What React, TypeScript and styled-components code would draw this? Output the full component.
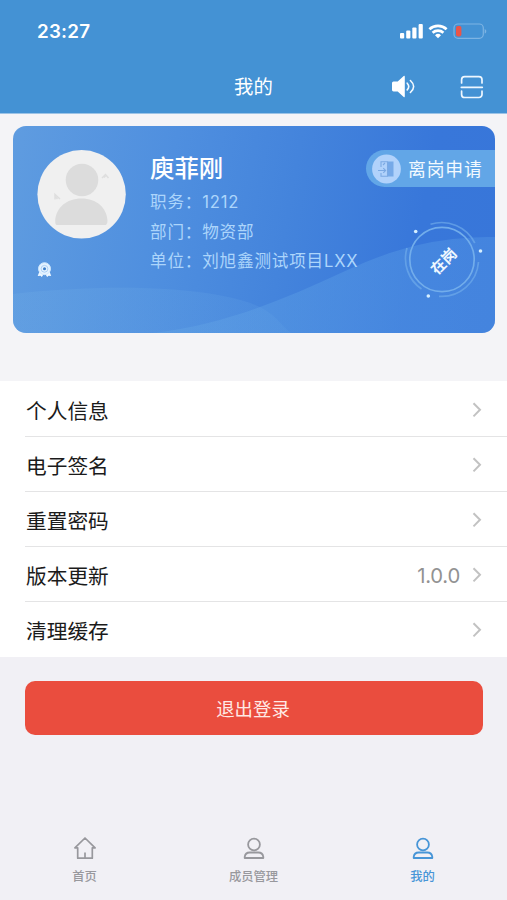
import React from "react";
import styled, { createGlobalStyle } from "styled-components";

const GlobalStyle = createGlobalStyle`
  * { box-sizing: border-box; }
  body {
    margin: 0;
    background: #f1f0f5;
    font-family: Inter, "Noto Sans CJK SC", sans-serif;
  }
`;

const Screen = styled.div`
  width: 507px;
  height: 900px;
  display: flex;
  flex-direction: column;
  overflow: hidden;
  background: linear-gradient(#f4f4f7 0, #f4f4f7 381px, #f1f0f5 381px);
`;

const Header = styled.header`
  height: 114px;
  flex: none;
  background: #4492d4;
  border-bottom: 1px solid #9cc3e6;
  color: #fff;
`;

const StatusBar = styled.div`
  height: 62px;
  display: flex;
  align-items: center;
  justify-content: space-between;
  padding: 0 20px 0 37px;
`;

const Clock = styled.span`
  font-size: 18.8px;
  font-weight: 600;
  letter-spacing: 0.2px;
`;

const NavBar = styled.div`
  height: 50px;
  display: grid;
  grid-template-columns: 1fr auto 1fr;
  align-items: center;
  padding: 0 23px;
`;

const NavTitle = styled.h1`
  grid-column: 2;
  margin: 0;
  font-size: 19.4px;
  font-weight: 400;
  line-height: 28px;
`;

const NavActions = styled.div`
  display: flex;
  justify-content: flex-end;
  align-items: center;
  gap: 45px;
`;

const Card = styled.section`
  position: relative;
  flex: none;
  height: 207px;
  margin: 12px 12px 48px 13px;
  border-radius: 13px;
  overflow: hidden;
  display: flex;
  padding: 24px 0 0 24px;
  background: linear-gradient(100deg, #5f9ce0 0%, #4f8fdf 32%, #4484dc 56%, #3877da 82%, #3876d9 100%);
`;

const CardWaves = styled.svg`
  position: absolute;
  inset: 0;
`;

const Side = styled.div`
  position: relative;
  width: 113px;
  display: flex;
  flex-direction: column;
  gap: 23px;
`;

const Details = styled.div`
  position: relative;
  color: #acd5fb;
`;

const Name = styled.h2`
  margin: 0 0 5px;
  color: #fff;
  font-size: 24.4px;
  font-weight: 500;
  line-height: 37px;
`;

const Detail = styled.p<{ $height: number }>`
  margin: 0;
  height: ${({ $height }) => $height}px;
  font-size: 16.6px;
  line-height: 20px;
  letter-spacing: 0.8px;
  white-space: nowrap;
`;

const LeaveButton = styled.button`
  position: absolute;
  right: 0;
  top: 24px;
  width: 129px;
  height: 37px;
  display: flex;
  align-items: center;
  gap: 7px;
  padding: 0 0 0 6px;
  border: 0;
  border-radius: 19px 0 0 19px;
  background: #62a6e7;
  color: #f3faff;
  font: inherit;
  font-size: 17.8px;
  letter-spacing: 0.9px;
  white-space: nowrap;
`;

const LeaveLabel = styled.span`
  margin-top: -2px;
`;

const Stamp = styled.div`
  position: absolute;
  left: 389px;
  top: 93px;
  width: 82px;
  height: 82px;
  display: grid;
  place-items: center;
  & > * { grid-area: 1 / 1; }
`;

const StampText = styled.span`
  transform: rotate(-45deg);
  color: #eff8ff;
  font-size: 14.8px;
  font-weight: 700;
`;

const Menu = styled.nav`
  flex: none;
  height: 276px;
  background: #fff;
  padding-left: 25px;
`;

const MenuRow = styled.div`
  height: 55px;
  display: flex;
  align-items: center;
  padding: 3px 24px 0 1px;
  color: #1b1b1b;
  font-size: 20.7px;
  &:not(:last-child) { box-shadow: 0 1px 0 #e4e4e5; }
`;

const MenuLabel = styled.span`
  flex: 1;
  margin-top: -1px;
`;

const Version = styled.span`
  margin-right: 10px;
  color: #929292;
  font-size: 20.3px;
  letter-spacing: -0.25px;
`;

const Logout = styled.button`
  flex: none;
  height: 54px;
  margin: 24px 24px 0 25px;
  padding: 0 2px 0 0;
  border: 0;
  border-radius: 10px;
  background: #ea4d3e;
  color: #ffe9e5;
  font: inherit;
  font-size: 18.4px;
`;

const TabBar = styled.footer`
  margin-top: auto;
  flex: none;
  height: 64px;
  display: grid;
  grid-template-columns: repeat(3, 1fr);
`;

const Tab = styled.div<{ $active?: boolean }>`
  display: flex;
  flex-direction: column;
  align-items: center;
  gap: 7px;
  color: ${({ $active }) => ($active ? "#4795d7" : "#98989d")};
  font-size: 12.3px;
  font-weight: 500;
  line-height: 20px;
`;

const StatusIcons = () => (
  <svg width="87" height="22" viewBox="400 20 87 22" fill="none">
    <g fill="#fff">
      <rect x="400" y="33" width="4.2" height="5.4" rx="1" />
      <rect x="406.2" y="30.5" width="4.2" height="7.9" rx="1" />
      <rect x="412.3" y="27.4" width="4.2" height="11" rx="1" />
      <rect x="418.6" y="24" width="4.2" height="14.4" rx="1" />
      <path d="M438 38.3l-3-3.1a4.4 4.4 0 0 1 6 0z" />
    </g>
    <path d="M429.4 29.2a12.7 12.7 0 0 1 17.2 0M432.6 32.8a8 8 0 0 1 10.8 0" stroke="#fff" strokeWidth="2.7" />
    <rect x="454" y="24" width="29.3" height="14.3" rx="4" stroke="#7db4e3" strokeWidth="1.2" />
    <rect x="456" y="26" width="5.4" height="10.4" rx="1.8" fill="#eb5549" />
    <path d="M484.7 29v4.6c2.1-.8 2.1-3.8 0-4.6z" fill="#7db4e3" />
  </svg>
);

const SpeakerIcon = () => (
  <svg width="24" height="24" viewBox="391 75 24 24" fill="none">
    <path d="M392 83q0-1.500 1.500-1.500h4.200l6-5.400q1.100-.8 1.100.7v19.400q0 1.500-1.100.7l-6-5.400h-4.200Q392 91.500 392 90z" fill="#fff" />
    <path d="M407.200 83.200q3.100 3.300 0 6.700M410.400 80.500q6.500 6 0 12" stroke="#f4faff" strokeWidth="1.600" strokeLinecap="round" />
  </svg>
);

const ScanIcon = () => (
  <svg width="24" height="24" viewBox="460 74 24 24" fill="none" stroke="#eef7ff" strokeWidth="1.7" strokeLinecap="round">
    <path d="M461.600 82v-3.200a3.100 3.100 0 0 1 3.100-3.100h14.200a3.100 3.100 0 0 1 3.100 3.100V82M461.600 90.200v3.200a3.100 3.100 0 0 0 3.100 3.100h14.200a3.100 3.100 0 0 0 3.100-3.100v-3.200M461.300 86.300h21" />
  </svg>
);

const Avatar = () => (
  <svg width="89" height="89" viewBox="0 0 89 89">
    <circle cx="44.600" cy="44.300" r="44.200" fill="#f0f0f0" />
    <circle cx="45" cy="30" r="16.300" fill="#dcdcdc" />
    <path d="M19.500 75q-1.500-1-1.300-4c.7-13 11-22.400 26.300-22.400S69.700 58 70.500 70.500q.2 3-1.500 4.500z" fill="#dcdcdc" />
    <path d="M65 28l3.500-3.500L71.500 28M67 27.500l1.500-1.500M18 49.500V44.500l5 4.500M18.500 47l2 2" stroke="#dedede" strokeWidth="1.500" fill="none" />
  </svg>
);

const MedalIcon = () => (
  <svg width="15" height="16" viewBox="0 0 15 16">
    <path d="M3 8L.7 14l2.800-.3 1.300 1.300 1.700-2.500h2l1.700 2.500 1.300-1.300 2.700.3L12 8z" fill="#eff8ff" />
    <circle cx="7.500" cy="6.700" r="6" fill="#e4f2ff" stroke="#cce5fc" />
    <circle cx="7.500" cy="6.800" r="3.400" fill="none" stroke="#9dc7f1" strokeWidth=".8" />
    <circle cx="7.500" cy="6.800" r="1.500" fill="#3d7fc9" />
  </svg>
);

const DoorIcon = () => (
  <svg width="29" height="30" viewBox="0 0 29 30">
    <circle cx="14.500" cy="15" r="14.400" fill="#b1d2fb" />
    <path d="M15.500 7.500h6v15h-6z" fill="#76a9e8" />
    <path d="M9 13V7.800h6.500v14.400H9V19M6 16.500h7.500M11.300 14.200l2.300 2.300-2.300 2.300M11 11l2-2" fill="none" stroke="#7ba9e3" strokeWidth="1.100" />
  </svg>
);

const StampRing = () => (
  <svg width="82" height="82" viewBox="402 219 82 82" fill="none" stroke="#72adeb">
    <circle cx="442" cy="259.500" r="32.200" strokeWidth="1.700" />
    <path d="M430.500 224.300A37 37 0 0 1 474.800 243M407 248A37 37 0 0 0 421.500 289M439 296.300A37 37 0 0 0 478.500 262" strokeWidth="1.700" opacity=".65" />
    <g fill="#d6efff" stroke="none">
      <circle cx="415.700" cy="231.500" r="1.800" />
      <circle cx="480.500" cy="251" r="1.800" />
      <circle cx="428.300" cy="296" r="1.800" />
    </g>
  </svg>
);

const Chevron = () => (
  <svg width="13" height="18" viewBox="0 0 13 18" fill="none">
    <path d="M3.500 2.200L10 8.800l-6.500 6.600" stroke="#c2c2c2" strokeWidth="2" />
  </svg>
);

const HomeIcon = () => (
  <svg width="24" height="24" viewBox="0 0 24 24" fill="none" stroke="currentColor" strokeWidth="1.700" strokeLinejoin="round">
    <path d="M4.700 11.800H1.900L12 2l10.100 9.800h-2.800v10.400H4.700zM12 22v-5.500" />
  </svg>
);

const PersonIcon = () => (
  <svg width="24" height="24" viewBox="0 0 24 24" fill="none" stroke="currentColor" strokeWidth="1.800" strokeLinejoin="round">
    <circle cx="12" cy="8.500" r="5.900" />
    <path d="M2.700 22v-1.200q.7-4.300 4.900-4.300h8.800q4.200 0 4.900 4.300V22z" />
  </svg>
);

const details = [
  { label: "职务", value: "1212", height: 30 },
  { label: "部门", value: "物资部", height: 29 },
  { label: "单位", value: "刘旭鑫测试项目LXX", height: 28 },
];

const menu = [
  { label: "个人信息" },
  { label: "电子签名" },
  { label: "重置密码" },
  { label: "版本更新", value: "1.0.0" },
  { label: "清理缓存" },
];

export default function App() {
  return (
    <>
      <GlobalStyle />
      <Screen>
        <Header>
          <StatusBar>
            <Clock>23:27</Clock>
            <StatusIcons />
          </StatusBar>
          <NavBar>
            <NavTitle>我的</NavTitle>
            <NavActions>
              <SpeakerIcon />
              <ScanIcon />
            </NavActions>
          </NavBar>
        </Header>

        <Card>
          <CardWaves width="482" height="207" viewBox="0 0 482 207">
            <defs>
              <linearGradient id="wave" x1="0" x2="1" y1="0" y2="0">
                <stop offset="0" stopColor="#63a5e6" stopOpacity=".4" />
                <stop offset="0.5" stopColor="#5c9fe6" stopOpacity=".42" />
                <stop offset="1" stopColor="#5ca0e8" stopOpacity=".33" />
              </linearGradient>
              <linearGradient id="swell" x1="0" x2="1" y1="0" y2="0">
                <stop offset="0" stopColor="#6eabe5" stopOpacity=".3" />
                <stop offset="1" stopColor="#69a9e7" stopOpacity=".16" />
              </linearGradient>
            </defs>
            <path d="M140 207C210 199 270 174 330 146S432 111 482 111v96z" fill="url(#wave)" />
            <path d="M0 168C70 160 150 159 205 169s54 22 73 38H0z" fill="url(#swell)" />
          </CardWaves>
          <Side>
            <Avatar />
            <MedalIcon />
          </Side>
          <Details>
            <Name>庾菲刚</Name>
            {details.map((item) => (
              <Detail key={item.label} $height={item.height}>
                {item.label}：{item.value}
              </Detail>
            ))}
          </Details>
          <LeaveButton>
            <DoorIcon />
            <LeaveLabel>离岗申请</LeaveLabel>
          </LeaveButton>
          <Stamp>
            <StampRing />
            <StampText>在岗</StampText>
          </Stamp>
        </Card>

        <Menu>
          {menu.map((item) => (
            <MenuRow key={item.label}>
              <MenuLabel>{item.label}</MenuLabel>
              {item.value && <Version>{item.value}</Version>}
              <Chevron />
            </MenuRow>
          ))}
        </Menu>

        <Logout>退出登录</Logout>

        <TabBar>
          <Tab>
            <HomeIcon />
            首页
          </Tab>
          <Tab>
            <PersonIcon />
            成员管理
          </Tab>
          <Tab $active>
            <PersonIcon />
            我的
          </Tab>
        </TabBar>
      </Screen>
    </>
  );
}
